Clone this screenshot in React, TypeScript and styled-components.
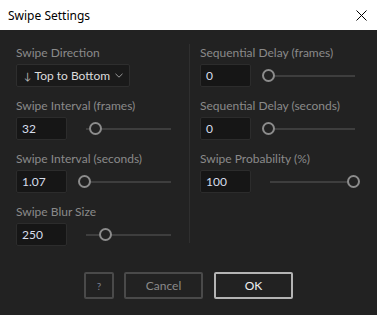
import React from "react";
import styled, { createGlobalStyle } from "styled-components";

const Global = createGlobalStyle`
  html, body { margin: 0; padding: 0; background: #222222; }
  body { width: 377px; height: 315px; overflow: hidden; }
  * { box-sizing: border-box; }
`;

const Window = styled.div`
  width: 377px;
  height: 315px;
  display: flex;
  flex-direction: column;
  background: #222222;
  font-family: Lato, "Noto Sans", sans-serif;
`;

const TitleBar = styled.div`
  height: 30px;
  flex: 0 0 30px;
  background: #ffffff;
  display: flex;
  align-items: center;
  justify-content: space-between;
  padding: 0 8px 0 8px;
`;

const Title = styled.span`
  font-family: "Noto Sans", sans-serif;
  font-size: 12px;
  color: #000000;
`;

const CloseBox = styled.div`
  width: 30px;
  height: 30px;
  display: flex;
  align-items: center;
  justify-content: center;
  margin-right: -7px;
`;

const Body = styled.div`
  flex: 1;
  display: flex;
  flex-direction: column;
  padding: 15px 0 0 16px;
`;

const Columns = styled.div`
  display: grid;
  grid-template-columns: 155px 1px 155px;
  column-gap: 18px;
`;

const Divider = styled.div`
  width: 1px;
  background: #2f2f2f;
  height: 199px;
  margin-top: -1px;
  margin-right: -8px;
`;

const Column = styled.div<{ $offset?: number }>`
  display: flex;
  flex-direction: column;
  gap: 11px;
  margin-left: ${(p) => p.$offset ?? 0}px;
`;

const Field = styled.div`
  display: flex;
  flex-direction: column;
  gap: 3px;
`;

const Label = styled.div`
  height: 16px;
  line-height: 16px;
  font-size: 12px;
  color: #8a8a8a;
  white-space: nowrap;
`;

const Row = styled.div`
  display: flex;
  align-items: center;
  height: 23px;
  gap: 19px;
`;

const Input = styled.div`
  width: 51px;
  height: 23px;
  background: #161616;
  border: 1px solid #2c2c2c;
  border-radius: 2px;
  padding-left: 5px;
  display: flex;
  align-items: center;
  font-size: 12px;
  color: #d6deec;
`;

const Select = styled.div`
  width: 114px;
  height: 23px;
  background: #1a1a1a;
  border: 1px solid #2e2e2e;
  border-radius: 2px;
  padding: 0 6px 0 7px;
  display: flex;
  align-items: center;
  justify-content: space-between;
  font-size: 12px;
  color: #dcdcdc;
`;

const SelectText = styled.span`
  display: flex;
  align-items: center;
  gap: 3px;
  white-space: nowrap;
`;

const ArrowGlyph = styled.span`
  font-size: 10px;
  color: #b8b8b8;
`;

const Track = styled.div`
  position: relative;
  width: 85px;
  height: 2px;
  background: #3e3e3e;
`;

const Knob = styled.div`
  position: absolute;
  top: 50%;
  width: 13px;
  height: 13px;
  margin-left: -7px;
  margin-top: -6.5px;
  border-radius: 50%;
  border: 2px solid #8c8c8c;
  background: #222222;
`;

const Footer = styled.div`
  display: flex;
  justify-content: center;
  gap: 10px;
  margin-top: 26px;
  margin-left: -16px;
`;

const Button = styled.div<{ $primary?: boolean; $w: number }>`
  width: ${(p) => p.$w}px;
  height: 27px;
  border: 2px solid ${(p) => (p.$primary ? "#b4b4b4" : "#4a4a4a")};
  border-radius: 2px;
  display: flex;
  align-items: center;
  justify-content: center;
  font-size: 12px;
  color: ${(p) => (p.$primary ? "#f0f0f0" : "#8a8a8a")};
  margin-left: ${(p) => (p.$primary ? 1 : 0)}px;
`;

const SmallQ = styled.span`
  font-size: 10px;
  color: #7a8090;
`;

function Slider({ pos }: { pos: number }) {
  return (
    <Track>
      <Knob style={{ left: `${pos}px` }} />
    </Track>
  );
}

function NumField({ label, value, pos }: { label: string; value: string; pos: number }) {
  return (
    <Field>
      <Label>{label}</Label>
      <Row>
        <Input>{value}</Input>
        <Slider pos={pos} />
      </Row>
    </Field>
  );
}

export default function App() {
  return (
    <Window>
      <Global />
      <TitleBar>
        <Title>Swipe Settings</Title>
        <CloseBox>
          <svg width="11" height="11" viewBox="0 0 11 11">
            <path d="M0.5 0.5 L10.5 10.5 M10.5 0.5 L0.5 10.5" stroke="#000" strokeWidth="1" fill="none" />
          </svg>
        </CloseBox>
      </TitleBar>
      <Body>
        <Columns>
          <Column>
            <Field>
              <Label>Swipe Direction</Label>
              <Row>
                <Select>
                  <SelectText>
                    <ArrowGlyph>↓</ArrowGlyph>
                    <span>Top to Bottom</span>
                  </SelectText>
                  <svg width="8" height="5" viewBox="0 0 8 5">
                    <path d="M0.5 0.8 L4 4.2 L7.5 0.8" stroke="#9a9a9a" strokeWidth="1" fill="none" />
                  </svg>
                </Select>
              </Row>
            </Field>
            <NumField label="Swipe Interval (frames)" value="32" pos={10} />
            <NumField label="Swipe Interval (seconds)" value="1.07" pos={-1} />
            <NumField label="Swipe Blur Size" value="250" pos={20} />
          </Column>
          <Divider />
          <Column $offset={-8}>
            <NumField label="Sequential Delay (frames)" value="0" pos={-1} />
            <NumField label="Sequential Delay (seconds)" value="0" pos={-1} />
            <NumField label="Swipe Probability (%)" value="100" pos={84} />
          </Column>
        </Columns>
        <Footer>
          <Button $w={30}>
            <SmallQ>?</SmallQ>
          </Button>
          <Button $w={79}>Cancel</Button>
          <Button $w={79} $primary>
            OK
          </Button>
        </Footer>
      </Body>
    </Window>
  );
}
